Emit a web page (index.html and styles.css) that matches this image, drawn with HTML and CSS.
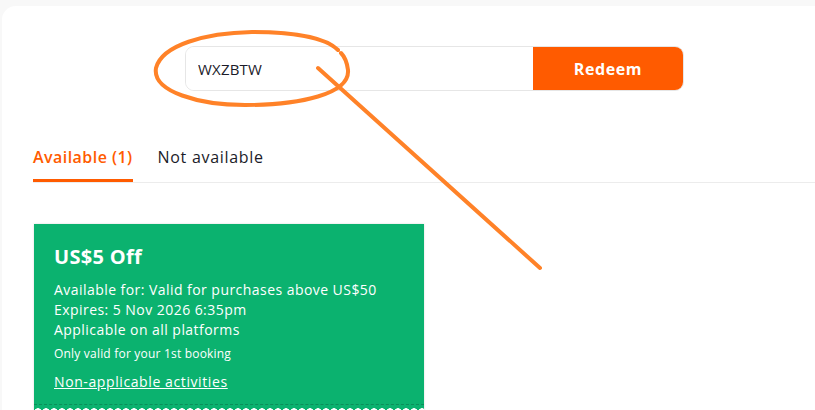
FILE: index.html
```html
<!DOCTYPE html>
<html lang="en">
<head>
<meta charset="utf-8">
<title>Redeem promo code</title>
<link rel="stylesheet" href="styles.css">
</head>
<body>
<div class="panel">
  <form class="redeem">
    <input class="code" type="text" value="WXZBTW">
    <button class="btn" type="button">Redeem</button>
  </form>
  <nav class="tabs">
    <span class="tab active">Available (1)</span>
    <span class="tab">Not available</span>
  </nav>
  <div class="card">
    <div class="card-body">
      <h2 class="title">US$5 Off</h2>
      <p class="line">Available for: Valid for purchases above US$50</p>
      <p class="line">Expires: 5 Nov 2026 6:35pm</p>
      <p class="line">Applicable on all platforms</p>
      <p class="note">Only valid for your 1st booking</p>
      <a class="link" href="#">Non-applicable activities</a>
    </div>
    <div class="scallop"></div>
  </div>
</div>
<svg class="annot" width="815" height="410" viewBox="0 0 815 410">
  <path d="M338 50 C 325 37, 290 32, 252 32 C 205 33, 162 45, 156 68 C 152 92, 200 105, 245 105 C 300 105, 350 94, 348 70 C 347 62, 345 57, 341 53" fill="none" stroke="#ff8228" stroke-width="4" stroke-linecap="round"/>
  <line x1="318" y1="68" x2="540" y2="268" stroke="#ff8228" stroke-width="4" stroke-linecap="round"/>
</svg>
</body>
</html>
```

FILE: styles.css
```css
html, body {
  margin: 0;
  padding: 0;
  height: 100%;
  overflow: hidden;
}
body {
  background: #f8f8f8;
  font-family: "Open Sans", "Noto Sans", sans-serif;
  color: #1b1b29;
}
.panel {
  margin: 6px 0 0 2px;
  background: #fff;
  border-radius: 14px 0 0 0;
  height: 420px;
  padding: 40px 0 0 31px;
  box-sizing: border-box;
}
.redeem {
  display: flex;
  margin: 0 0 0 152px;
  width: 499px;
  height: 45px;
  box-sizing: border-box;
  border: 1px solid #e6e6e6;
  border-radius: 9px;
  overflow: hidden;
}
.code {
  flex: 1;
  border: 0;
  outline: 0;
  padding: 0 0 0 12px;
  font-family: inherit;
  font-size: 15px;
  letter-spacing: 0.2px;
  color: #1b1b29;
  background: #fff;
}
.btn {
  width: 150px;
  border: 0;
  background: #ff5b00;
  color: #fff;
  font-family: inherit;
  font-weight: 700;
  font-size: 16px;
  letter-spacing: 0.6px;
  padding: 0;
}
.tabs {
  display: flex;
  gap: 25px;
  margin-top: 54px;
  border-bottom: 1px solid #ececec;
}
.tab {
  font-size: 16px;
  letter-spacing: 0.7px;
  line-height: 24px;
  padding-bottom: 13px;
  color: #1b1b29;
}
.tab.active {
  color: #ff5b00;
  font-weight: 600;
  letter-spacing: 0.45px;
  border-bottom: 3px solid #ff5b00;
  padding-bottom: 10px;
}
.card {
  width: 390px;
  margin: 41px 0 0 1px;
  background: #0bb26f;
  box-shadow: 0 0 2px rgba(0,0,0,0.15);
  color: #fff;
}
.card-body {
  padding: 20px 20px 12px;
  border-bottom: 1px dashed #0a8f5a;
  letter-spacing: 0.45px;
}
.title {
  margin: 0 0 10px;
  font-size: 20px;
  letter-spacing: 0.3px;
  line-height: 26px;
  font-weight: 700;
}
.line {
  margin: 0;
  font-size: 14px;
  line-height: 20px;
}
.note {
  margin: 5px 0 0;
  font-size: 12px;
  letter-spacing: 0.2px;
  line-height: 18px;
}
.link {
  display: inline-block;
  margin-top: 9px;
  color: #fff;
  font-size: 14px;
  letter-spacing: 0.6px;
  line-height: 20px;
  text-decoration: underline;
}
.scallop {
  height: 10px;
  background-image: radial-gradient(circle at 4px 7px, #fff 3.5px, transparent 4px);
  background-size: 8px 10px;
  background-repeat: repeat-x;
}
.annot {
  position: absolute;
  left: 0;
  top: 0;
  pointer-events: none;
}
```
